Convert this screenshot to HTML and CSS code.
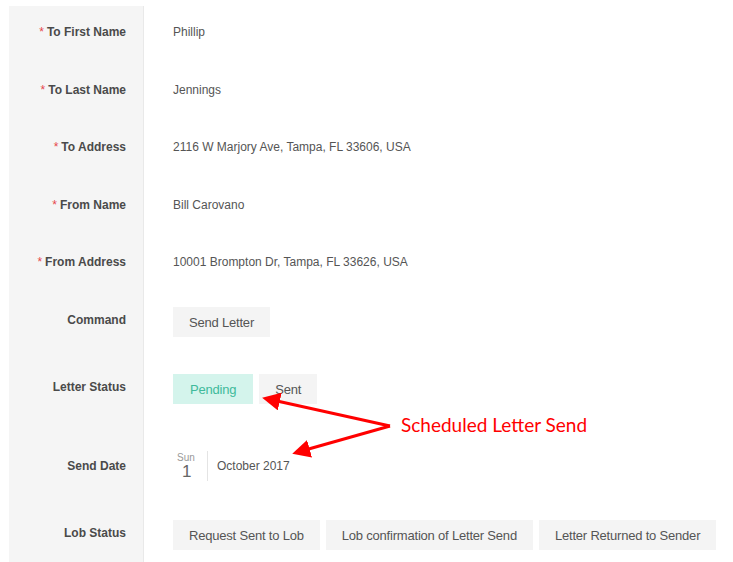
FILE: index.html
```
<!DOCTYPE html>
<html lang="en">

<head>
  <meta charset="UTF-8">
  <meta name="viewport" content="width=device-width, initial-scale=1.0">
  <title>Letter</title>
  <link rel="stylesheet" href="styles.css">
</head>

<body>
  <div class="form">
    <div class="row first">
      <div class="label"><span class="req">*</span> To First Name</div>
      <div class="value"><span class="text">Phillip</span></div>
    </div>
    <div class="row">
      <div class="label"><span class="req">*</span> To Last Name</div>
      <div class="value"><span class="text">Jennings</span></div>
    </div>
    <div class="row">
      <div class="label"><span class="req">*</span> To Address</div>
      <div class="value"><span class="text">2116 W Marjory Ave, Tampa, FL 33606, USA</span></div>
    </div>
    <div class="row">
      <div class="label"><span class="req">*</span> From Name</div>
      <div class="value"><span class="text">Bill Carovano</span></div>
    </div>
    <div class="row">
      <div class="label"><span class="req">*</span> From Address</div>
      <div class="value"><span class="text">10001 Brompton Dr, Tampa, FL 33626, USA</span></div>
    </div>
    <div class="row command">
      <div class="label">Command</div>
      <div class="value"><span class="btn">Send Letter</span></div>
    </div>
    <div class="row status">
      <div class="label">Letter Status</div>
      <div class="value">
        <span class="btn active">Pending</span>
        <span class="btn">Sent</span>
      </div>
    </div>
    <div class="row date">
      <div class="label">Send Date</div>
      <div class="value">
        <div class="day">
          <span class="dow">Sun</span>
          <span class="num">1</span>
        </div>
        <span class="month">October 2017</span>
      </div>
    </div>
    <div class="row lob">
      <div class="label">Lob Status</div>
      <div class="value">
        <span class="btn">Request Sent to Lob</span>
        <span class="btn">Lob confirmation of Letter Send</span>
        <span class="btn">Letter Returned to Sender</span>
      </div>
    </div>
  </div>

  <!-- annotation -->
  <svg class="arrows" width="733" height="562" viewBox="0 0 733 562">
    <defs>
      <marker id="head" markerWidth="6" markerHeight="6" refX="4" refY="3" orient="auto" markerUnits="strokeWidth">
        <path d="M0,0 L6,3 L0,6 Z" fill="#ff0000" />
      </marker>
    </defs>
    <line x1="390" y1="426" x2="268" y2="399" stroke="#ff0000" stroke-width="3" marker-end="url(#head)" />
    <line x1="390" y1="426" x2="298" y2="452" stroke="#ff0000" stroke-width="3" marker-end="url(#head)" />
  </svg>
  <div class="note">Scheduled Letter Send</div>
</body>

</html>
```

FILE: styles.css
```
body {
  margin: 0;
  font-family: 'Liberation Sans', Arial, sans-serif;
  font-size: 12px;
  color: #555;
  background: #fff;
}

.form {
  margin: 6px 0 0 9px;
}

.row {
  display: grid;
  grid-template-columns: 135px 1fr;
}

.label,
.value {
  padding-top: 27.5px;
  height: 30px;
}

.label {
  background: #f5f5f5;
  border-right: 1px solid #e9e9e9;
  padding-right: 17px;
  display: flex;
  align-items: center;
  justify-content: flex-end;
  font-weight: bold;
  color: #4a4a4a;
}

.req {
  color: #e6474c;
  font-weight: normal;
  margin-right: 3px;
}

.value {
  padding-left: 29px;
  display: flex;
  align-items: center;
  gap: 6px;
}

.first .label,
.first .value {
  padding-top: 11px;
}

.command .label,
.command .value {
  padding-top: 30px;
}

.command .label {
  padding-top: 28px;
  padding-bottom: 2px;
}

.status .label,
.status .value {
  padding-top: 37px;
}

.status .label {
  align-items: flex-start;
  padding-top: 43px;
  height: 24px;
}

.date .label,
.date .value {
  padding-top: 47px;
}

.lob .label,
.lob .value {
  padding-top: 39px;
  padding-bottom: 12px;
}

.lob .label {
  padding-top: 37px;
  padding-bottom: 14px;
}

/* 按鈕 */
.btn {
  display: inline-flex;
  align-items: center;
  height: 30px;
  padding: 0 16px;
  background: #f4f4f4;
  font-size: 13px;
  color: #555;
  letter-spacing: -0.2px;
}

.btn.active {
  background: #d4f4ec;
  color: #3fba9b;
  padding: 0 17px;
}

/* 日期 */
.day {
  width: 30px;
  height: 30px;
  border-right: 1px solid #e4e4e4;
  display: flex;
  flex-direction: column;
  align-items: flex-start;
  padding-left: 4px;
  margin-right: 3px;
}

.dow {
  font-size: 10px;
  color: #999;
  line-height: 10px;
  margin-top: 2px;
}

.num {
  font-size: 17px;
  color: #666;
  line-height: 18px;
  margin-left: 5px;
}

.month {
  color: #555;
}

/* 註解 */
.arrows {
  position: absolute;
  top: 0;
  left: 0;
  pointer-events: none;
}

.note {
  position: absolute;
  left: 401px;
  top: 413px;
  font-family: Lato, 'Open Sans', sans-serif;
  font-size: 19px;
  color: #ff0000;
}
```
